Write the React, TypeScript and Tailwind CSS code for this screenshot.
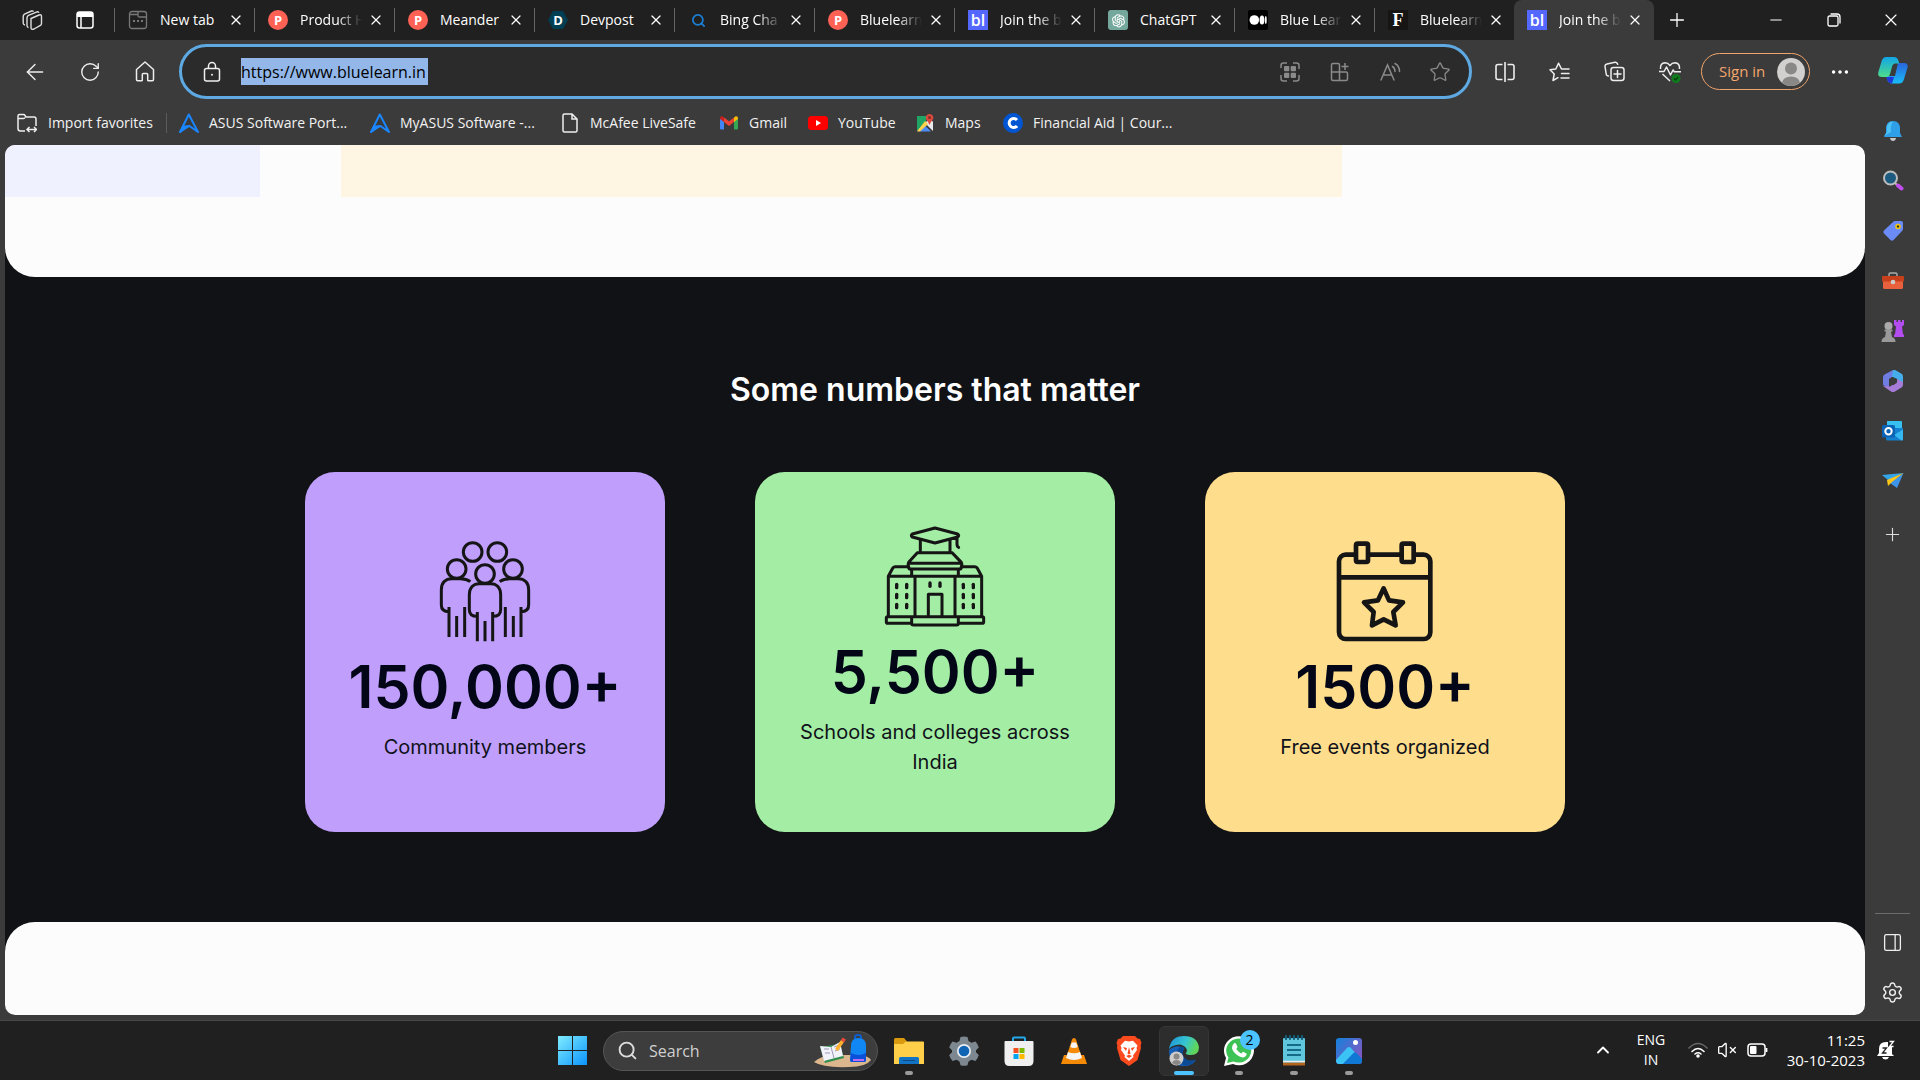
import type { ReactNode } from "react";
import {
  ArrowLeft,
  ChevronUp,
  Ellipsis,
  Minus,
  PanelRight,
  Plus,
  RotateCw,
  Search,
  Settings,
  Star,
  VolumeX,
  X,
} from "lucide-react";
import { AiOutlineOpenAI } from "react-icons/ai";

/* ---------- favicons ---------- */

function ProductHuntIcon() {
  return <span className="flex h-5 w-5 items-center justify-center rounded-full bg-[#ff6154] text-[13px] leading-5 font-bold text-white">P</span>;
}

function BlIcon() {
  return <span className="flex h-5 w-5 items-center justify-center bg-[#5468ff] text-base leading-5 font-semibold text-white">bl</span>;
}

function NewTabIcon() {
  return (
    <svg width="20" height="20" viewBox="0 0 20 20" fill="none" stroke="#777" strokeWidth="1.3">
      <rect x="1.5" y="1.5" width="17" height="17" rx="2.5" />
      <path d="M1.500 4.500H10M10 1.500V5.500Q10 7 11.500 7H18.500" />
      <path d="M5 11h2M9 11h2M13 11h2" strokeWidth="2" />
    </svg>
  );
}

function DevpostIcon() {
  return (
    <span className="relative flex h-5 w-5 items-center justify-center text-[13px] leading-5 font-bold text-white">
      <svg className="absolute inset-0" width="20" height="20" viewBox="0 0 20 20">
        <path d="M5 1h10l5 9-5 9H5l-5-9z" fill="#003e54" />
      </svg>
      <span className="relative">D</span>
    </span>
  );
}

function MediumIcon() {
  return (
    <svg width="20" height="20" viewBox="0 0 20 20">
      <rect width="20" height="20" rx="2" fill="#000" />
      <circle cx="6.300" cy="10" r="4.800" fill="#fff" />
      <ellipse cx="14" cy="10" rx="2.400" ry="4.500" fill="#fff" />
      <ellipse cx="17.800" cy="10" rx="0.900" ry="4" fill="#fff" />
    </svg>
  );
}

type Tab = { label: string; icon: ReactNode; active?: boolean };

const tabs: Tab[] = [
  { label: "New tab", icon: <NewTabIcon /> },
  { label: "Product H", icon: <ProductHuntIcon /> },
  { label: "Meander", icon: <ProductHuntIcon /> },
  { label: "Devpost", icon: <DevpostIcon /> },
  { label: "Bing Cha", icon: <Search size={15} color="#1b7fd6" strokeWidth={2.8} className="mx-auto" /> },
  { label: "Bluelearn", icon: <ProductHuntIcon /> },
  { label: "Join the b", icon: <BlIcon /> },
  {
    label: "ChatGPT",
    icon: (
      <span className="flex h-5 w-5 items-center justify-center rounded-[3px] bg-[#74a89c]">
        <AiOutlineOpenAI size={17} color="#fff" />
      </span>
    ),
  },
  { label: "Blue Lear", icon: <MediumIcon /> },
  {
    label: "Bluelearn",
    icon: <span className="flex h-5 w-5 items-center justify-center bg-[#161514] font-['Liberation_Serif',serif] text-lg leading-5 font-bold text-white">F</span>,
  },
  { label: "Join the b", icon: <BlIcon />, active: true },
];

function TabStrip() {
  return (
    <header className="flex h-10 shrink-0 bg-[#202020] text-sm text-white">
      <div className="flex w-[114px] shrink-0 items-center pl-1">
        <button className="flex w-14 justify-center" aria-label="Workspaces">
          <svg width="21" height="21" viewBox="0 0 21 21" fill="none" stroke="#ddd" strokeWidth="1.400" strokeLinejoin="round">
            <path d="M9 8.500l8-3.500q2.500-.8 2.500 1.500v7q0 1.500-1.500 2.200l-6 3.300q-3 1.200-3-1.500z" />
            <path d="M6.500 17.500q-1.500-.3-1.500-2V8q0-2 1.500-2.700L15 1.800q1.500-.3 2 1" />
            <path d="M3 15q-1.800-.3-1.800-2V6.500Q1.200 5 2.500 4.200L9.500 1q1.500-.4 2 .6" />
          </svg>
        </button>
        <button className="flex w-[50px] justify-center" aria-label="Tab actions menu">
          <svg width="18" height="18" viewBox="0 0 18 18" fill="none" stroke="#fff" strokeWidth="1.500">
            <rect x="1" y="1" width="16" height="16" rx="2.500" />
            <path d="M1 3.500h16" strokeWidth="5" />
            <path d="M5 4v13" />
          </svg>
        </button>
      </div>
      {tabs.map((t, i) => (
        <div
          key={i}
          className={
            t.active
              ? "flex w-[140px] items-center rounded-t-lg bg-[#3b3b3b]"
              : "flex w-[140px] items-center before:h-6 before:w-px before:bg-[#666]"
          }
        >
          <div className="ml-[13px] w-5 shrink-0">{t.icon}</div>
          <button
            className={
              t.label.length > 7
                ? "ml-3 w-[62px] shrink-0 overflow-hidden text-left whitespace-nowrap [mask-image:linear-gradient(to_right,#000_60%,transparent)]"
                : "ml-3 w-[62px] shrink-0 text-left whitespace-nowrap"
            }
          >
            {t.label}
          </button>
          <button className="ml-1 flex w-5 justify-center" aria-label="Close tab">
            <X size={16} strokeWidth={1.8} />
          </button>
        </div>
      ))}
      <button className="ml-[11px] flex w-6 items-center justify-center" aria-label="New tab">
        <Plus size={22} strokeWidth={1.4} />
      </button>
      <div className="ml-auto flex">
        <button className="flex w-[58px] items-center justify-center" aria-label="Minimize">
          <Minus size={18} strokeWidth={1.4} />
        </button>
        <button className="flex w-[57px] items-center justify-center" aria-label="Restore">
          <svg width="14" height="14" viewBox="0 0 14 14" fill="none" stroke="#fff" strokeWidth="1.300">
            <rect x="1" y="3" width="10" height="10" rx="1.500" />
            <path d="M3.500 1h6.500q3 0 3 3v6.500" />
          </svg>
        </button>
        <button className="flex w-[58px] items-center justify-center" aria-label="Close">
          <X size={20} strokeWidth={1.4} />
        </button>
      </div>
    </header>
  );
}

function ToolButton({ label, children }: { label: string; children: ReactNode }) {
  return (
    <button className="flex h-9 w-[55px] shrink-0 items-center justify-center text-[#eee]" aria-label={label}>
      {children}
    </button>
  );
}

function AddressButton({ label, children }: { label: string; children: ReactNode }) {
  return (
    <button className="flex h-9 w-[50px] shrink-0 items-center justify-center text-[#8a8a8a]" aria-label={label}>
      {children}
    </button>
  );
}

function Toolbar() {
  return (
    <div className="flex h-[63px] shrink-0 items-center pl-[7px]">
      <ToolButton label="Back">
        <ArrowLeft size={26} strokeWidth={1.3} />
      </ToolButton>
      <ToolButton label="Refresh">
        <RotateCw size={22} strokeWidth={1.5} />
      </ToolButton>
      <ToolButton label="Home">
        <svg width="20" height="21" viewBox="0 0 20 21" fill="none" stroke="currentColor" strokeWidth="1.500" strokeLinejoin="round">
          <path d="M1.500 8.500L10 1l8.500 7.500V18.500q0 1.200-1.200 1.200H13.500q-.8 0-.8-.8V13.500q0-1-1-1H8.300q-1 0-1 1v5.400q0 .8-.8.800H2.700q-1.200 0-1.200-1.200z" />
        </svg>
      </ToolButton>
      <div className="ml-[7px] flex h-[55px] min-w-0 flex-1 items-center rounded-full border-3 border-[#5ea9e2] bg-[#2b2b2b] pr-1">
        <button className="ml-5 mr-[19px] text-[#eee]" aria-label="View site information">
          <svg width="20" height="22" viewBox="0 0 20 22" fill="none" stroke="currentColor" strokeWidth="1.500">
            <rect x="2.500" y="7.500" width="15" height="12.500" rx="2" />
            <path d="M6.500 7.500V5a3.500 3.500 0 0 1 7 0v2.500" />
            <circle cx="10" cy="13.700" r="1" fill="currentColor" stroke="none" />
          </svg>
        </button>
        <div className="flex min-w-0 flex-1">
          <input
            aria-label="Address and search bar"
            defaultValue="https://www.bluelearn.in"
            className="h-[27px] w-[187px] bg-[#92b7e8] text-base text-black outline-none"
          />
        </div>
        <AddressButton label="Apps">
          <svg width="20" height="20" viewBox="0 0 20 20" fill="none" stroke="currentColor" strokeWidth="1.500">
            <path d="M1 6V3.500Q1 1 3.500 1H7M13 1h3.500Q19 1 19 3.500V7M19 13v3.500q0 2.500-2.500 2.500H13M7 19H3.500Q1 19 1 16.500V13" />
            <g fill="currentColor" stroke="none">
              <rect x="4" y="4" width="5.300" height="5.300" rx="1" />
              <rect x="10.700" y="4" width="5.300" height="5.300" rx="1" />
              <rect x="4" y="10.700" width="5.300" height="5.300" rx="1" />
              <rect x="10.700" y="10.700" width="5.300" height="5.300" rx="1" />
            </g>
          </svg>
        </AddressButton>
        <AddressButton label="App available">
          <svg width="20" height="20" viewBox="0 0 20 20" fill="none" stroke="currentColor" strokeWidth="1.500">
            <path d="M9.500 10V3q0-1.500-1.500-1.500H3Q1.500 1.500 1.500 3v14q0 1.500 1.500 1.500h13q1.500 0 1.500-1.500v-5.500q0-1.500-1.500-1.500H1.500M9.500 10v8.500" />
            <path d="M15 1v7M11.500 4.500h7" />
          </svg>
        </AddressButton>
        <AddressButton label="Read aloud">
          <svg width="21" height="20" viewBox="0 0 21 20" fill="none" stroke="currentColor" strokeWidth="1.500" strokeLinecap="round">
            <path d="M1 18L7.500 3 14 18M3.300 13h8.400" />
            <path d="M12.500 4.500q2.500 1.500 2.500 5M15 1.500q4.500 2.500 4.500 8" />
          </svg>
        </AddressButton>
        <AddressButton label="Add to favorites">
          <Star size={22} strokeWidth={1.4} />
        </AddressButton>
      </div>
      <div className="ml-[5px] flex">
        <ToolButton label="Split screen">
          <svg width="20" height="20" viewBox="0 0 20 20" fill="none" stroke="currentColor" strokeWidth="1.600">
            <path d="M7.500 2.500H3Q1 2.500 1 4.500v11q0 2 2 2h4.500M12.500 2.500H17q2 0 2 2v11q0 2-2 2h-4.500M10 0v20" />
          </svg>
        </ToolButton>
        <ToolButton label="Favorites">
          <svg width="21" height="20" viewBox="0 0 21 20" fill="none" stroke="currentColor" strokeWidth="1.500" strokeLinejoin="round" strokeLinecap="round">
            <path d="M12.500 7L9.500 1.200 6.800 7 1 7.800l4.200 4.200-1.200 6.500 5-2.800M12.500 7H20M12.500 11.500H20M12 16h8" />
          </svg>
        </ToolButton>
        <ToolButton label="Collections">
          <svg width="21" height="21" viewBox="0 0 21 21" fill="none" stroke="currentColor" strokeWidth="1.500" strokeLinecap="round">
            <path d="M4.500 15Q2.500 15 2.200 13L1 5.500Q.8 3.500 3 3l8-1.800q2-.4 2.700 2" />
            <rect x="7" y="6.500" width="13" height="13" rx="2.500" />
            <path d="M13.500 9.500v7M10 13h7" />
          </svg>
        </ToolButton>
        <ToolButton label="Browser essentials">
          <svg width="22" height="22" viewBox="0 0 22 22" fill="none" stroke="currentColor" strokeWidth="1.500" strokeLinejoin="round">
            <path d="M1.500 8Q1 2 6 1.800q3 0 5 2.700 2-2.700 5-2.700 5 .2 4.500 6.200M3.500 13l7.500 7" />
            <path d="M0 10.500h5L7.500 6l4 8 2.500-5 1.300 1.800H22" />
            <circle cx="17" cy="17.500" r="4.500" fill="#0f7b1c" stroke="none" />
            <path d="M15 17.500l1.500 1.500 2.700-3" stroke="#0a3d10" strokeWidth="1.200" />
          </svg>
        </ToolButton>
      </div>
      <button className="ml-1 flex h-[37px] w-[109px] shrink-0 items-center rounded-full border border-[#f0a56c] pl-[17px] text-[15px] text-[#f5a66d]">
        <span className="w-[46px] whitespace-nowrap">Sign in</span>
        <svg className="ml-3" width="28" height="28" viewBox="0 0 28 28">
          <circle cx="14" cy="14" r="14" fill="#d2d0ce" />
          <circle cx="14" cy="10.500" r="6" fill="#8a8886" />
          <path d="M5 24.500q1.500-6 9-6t9 6q-4 3.500-9 3.500t-9-3.500z" fill="#8a8886" />
        </svg>
      </button>
      <button className="ml-[5px] flex h-9 w-[50px] shrink-0 items-center justify-center text-white" aria-label="Settings and more">
        <Ellipsis size={22} strokeWidth={1.8} />
      </button>
    </div>
  );
}

/* ---------- favorites bar ---------- */

function AsusIcon() {
  return (
    <svg width="20" height="20" viewBox="0 0 20 20" fill="none" stroke="#1a86ff" strokeWidth="2" strokeLinejoin="round">
      <path d="M6 13.500L1 19L9.800 1.500 19 19l-8.500-6z" />
      <path d="M1 19l9-6" />
    </svg>
  );
}

const favorites = [
  {
    label: "ASUS Software Port...",
    width: "w-[191px]",
    icon: <AsusIcon />,
  },
  { label: "MyASUS Software -...", width: "w-[190px]", icon: <AsusIcon /> },
  {
    label: "McAfee LiveSafe",
    width: "w-[159px]",
    icon: (
      <svg width="20" height="20" viewBox="0 0 20 20" fill="none" stroke="#eee" strokeWidth="1.500">
        <path d="M3 2.500Q3 1 4.500 1h7.500l5 5v11.500q0 1.500-1.500 1.500h-11Q3 19 3 17.500zM12 1v5h5" />
      </svg>
    ),
  },
  {
    label: "Gmail",
    width: "w-[89px]",
    icon: (
      <svg width="20" height="20" viewBox="0 0 20 20">
        <path d="M1 5v10.500q0 1 1 1h3V8z" fill="#4285f4" />
        <path d="M15 8v8.500h3q1 0 1-1V5z" fill="#34a853" />
        <path d="M1 5.500Q1 3 3.300 3.300L5 4.500V9L1 6z" fill="#c5221f" />
        <path d="M5 4.500l5 3.800 5-3.800V9l-5 4-5-4z" fill="#ea4335" />
        <path d="M15 4.500l1.700-1.200Q19 3 19 5.500V6l-4 3z" fill="#fbbc04" />
      </svg>
    ),
  },
  {
    label: "YouTube",
    width: "w-[107px]",
    icon: (
      <svg width="20" height="20" viewBox="0 0 20 20">
        <rect y="3" width="20" height="14" rx="3.500" fill="#f00" />
        <path d="M8 7v6l5-3z" fill="#fff" />
      </svg>
    ),
  },
  {
    label: "Maps",
    width: "w-[88px]",
    icon: (
      <svg width="20" height="20" viewBox="0 0 20 20">
        <path d="M2 3h9v7L2 18z" fill="#1fa463" />
        <path d="M2 18L15 5l3 4v9l-6-6z" fill="#e8eaed" />
        <path d="M4 18.500l6-6 6 6z" fill="#4d8bf5" />
        <path d="M10 8l3 3-8 7.500H2z" fill="#ffd04b" />
        <path d="M14.500 12Q13.500 9 11.500 7q-1.500-3 .5-5 2.500-2 5 0t.5 5q-2 2-3 5z" fill="#dd4b3e" />
        <circle cx="14.500" cy="4.500" r="1.500" fill="#822d25" />
      </svg>
    ),
  },
  {
    label: "Financial Aid | Cour...",
    width: "w-[170px]",
    icon: (
      <svg width="20" height="20" viewBox="0 0 20 20" fill="none">
        <circle cx="10" cy="10" r="10" fill="#0056d2" />
        <path d="M14 7a4.500 4.500 0 1 0 0 6" stroke="#fff" strokeWidth="3" />
      </svg>
    ),
  },
];

function FavoritesBar() {
  return (
    <nav className="flex h-[42px] shrink-0 items-center pb-[2px] pl-[17px] text-sm whitespace-nowrap text-[#f2f2f2]">
      <button className="flex w-[149px] shrink-0 items-center gap-[11px]">
        <svg width="20" height="20" viewBox="0 0 20 20" fill="none" stroke="#eee" strokeWidth="1.500">
          <path d="M8 18H3.500Q1 18 1 15.500V3Q1 1.500 2.500 1.500h4q1 0 1.500 1l1 1.500h8q2 0 2 2v7M1 5.500h5.500q1 0 1.500-1" />
          <path d="M10.500 16.500h9M12.500 14l-2.500 2.500 2.500 2.500M17 14l2.500 2.500L17 19" />
        </svg>
        Import favorites
      </button>
      <span className="mr-3 h-5 w-px bg-[#5c5c5c]" />
      {favorites.map((f) => (
        <a key={f.label} href="#" className={`flex shrink-0 items-center gap-[10px] ${f.width}`}>
          <span className="w-5 shrink-0">{f.icon}</span>
          {f.label}
        </a>
      ))}
    </nav>
  );
}

/* ---------- page ---------- */

function PeopleIcon() {
  return (
    <svg className="overflow-visible" width="100" height="100" viewBox="405 216 300 300" fill="none" stroke="#151515" strokeWidth="9">
      <circle cx="518" cy="246" r="28" />
      <circle cx="592" cy="246" r="28" />
      <circle cx="470" cy="297" r="28" />
      <circle cx="639" cy="297" r="28" />
      <circle cx="555" cy="312" r="28" />
      <path d="M532 439c-15 0-24-6-24-20V375c0-22 12-34 30-34h34c18 0 30 12 30 34v44c0 14-9 20-24 20" />
      <path d="M532 426v88M555 453v61M578 426v88" />
      <path d="M447 425c-15 0-23-7-23-20V360c0-22 12-34 32-34h25q18 0 30 9M447 411v90M470 438v63M494 411v90" />
      <path d="M663 425c15 0 23-7 23-20V360c0-22-12-34-32-34h-25q-18 0-30 9M663 411v90M640 438v63M616 411v90" />
    </svg>
  );
}

function SchoolIcon() {
  const windows = [440, 470, 640, 670].flatMap((x) => [348, 378, 408].map((y) => [x, y]));
  return (
    <svg className="overflow-visible" width="100" height="100" viewBox="405 171 300 300" fill="none" stroke="#151515" strokeWidth="9" strokeLinejoin="round" strokeLinecap="round">
      <path d="M555 174l-68 18q-6 4 0 9l68 18 68-18q6-5 0-9zM621 200v22q0 8 5 10" />
      <path d="M511 210v36M600 210v36M502 248h104l28 29q4 8-2 20H478q-6-12-2-20zM477 280h156" />
      <path d="M475 290h-40q-5 0-7 5l-13 24v119M635 290h40q5 0 7 5l13 24v119M485 300v18M625 300v18M415 319h280M495 319v119M615 319v119" />
      <path d="M413 440h284q4 0 4 4v12q0 4-4 4h-72v-20M485 440v20h-72q-4 0-4-4v-12q0-4 4-4M485 460q0 5 5 5h130q5 0 5-5M535 438v-65h41v65" />
      <g strokeWidth="10">
        {[...windows, [540, 344], [570, 344]].map(([x, y]) => (
          <path key={`${x}-${y}`} d={`M${x} ${y - 5}v10`} />
        ))}
      </g>
    </svg>
  );
}

function CalendarIcon() {
  return (
    <svg className="overflow-visible" width="100" height="100" viewBox="405 216 300 300" fill="none" stroke="#151515" strokeWidth="14" strokeLinejoin="round">
      <rect x="417" y="254" width="274" height="253" rx="20" />
      <path d="M417 322h274" />
      <rect x="468" y="221" width="36" height="55" rx="5" fill="#fedd8c" />
      <rect x="605" y="221" width="36" height="55" rx="5" fill="#fedd8c" />
      <path d="M551 355l16 36 42 6-29 29 7 40-36-18-35 18 5-40-29-29 42-6z" />
    </svg>
  );
}

const stats = [
  { value: "150,000+", label: "Community members", bg: "bg-[#bf9ffb]", icon: <PeopleIcon /> },
  { value: "5,500+", label: "Schools and colleges across India", bg: "bg-[#a4eda4]", icon: <SchoolIcon /> },
  { value: "1500+", label: "Free events organized", bg: "bg-[#fedd8c]", icon: <CalendarIcon /> },
];

function Page() {
  return (
    <main className="mb-[5px] ml-[5px] flex min-h-0 flex-1 flex-col overflow-hidden rounded-[10px] bg-[#101216] font-['Inter',sans-serif]">
      <div className="flex h-[132px] shrink-0 gap-[81px] rounded-b-[30px] bg-[#fcfcfc]">
        <div className="h-[52px] w-[255px] bg-[#f0f1ff]" />
        <div className="h-[52px] w-[1001px] bg-[#fff5e3]" />
      </div>
      <section className="flex shrink-0 flex-col items-center py-[90px]">
        <h2 className="text-[32px] leading-[45px] font-semibold text-white">Some numbers that matter</h2>
        <div className="mt-[60px] flex gap-[90px]">
          {stats.map((s) => (
            <div key={s.value} className={`flex h-[360px] w-[360px] flex-col items-center justify-center rounded-[30px] px-10 text-center ${s.bg}`}>
              {s.icon}
              <div className="text-[59px] leading-[90px] font-semibold text-[#020617]">{s.value}</div>
              <p className="text-xl leading-[30px] text-[#10121a]">{s.label}</p>
            </div>
          ))}
        </div>
      </section>
      <div className="flex-1 rounded-t-[30px] bg-[#fcfcfc]" />
    </main>
  );
}

/* ---------- sidebar ---------- */

const sidebarApps = [
  {
    label: "Notifications",
    icon: (
      <svg width="22" height="22" viewBox="0 0 22 22">
        <path d="M8 18h6q-.5 3-3 3t-3-3z" fill="#c8c8c8" />
        <path d="M4 9q0-8 7-8t7 8v4l2 4H2l2-4z" fill="#2f9fe8" />
        <path d="M5 8q0-6 6-6.500Q8 6 9 12l-7 4 3-4z" fill="#4cc2f5" />
      </svg>
    ),
  },
  {
    label: "Search",
    icon: (
      <svg width="22" height="22" viewBox="0 0 22 22">
        <path d="M13 13l3 3" stroke="#bdbdbd" strokeWidth="2" />
        <path d="M16 15.500l3.500 3" stroke="#c24df0" strokeWidth="4" strokeLinecap="round" />
        <circle cx="8.500" cy="8" r="6.500" fill="#1c5a80" stroke="#bdbdbd" strokeWidth="2" />
      </svg>
    ),
  },
  {
    label: "Shopping",
    icon: (
      <svg width="22" height="22" viewBox="0 0 22 22">
        <path d="M13 1h6q2 0 2 2v6q0 1-1 2l-8.500 9q-1.500 1.500-3 0l-6.500-6.500q-1.500-1.500 0-3L11 2q1-1 2-1z" fill="#6b8cf7" />
        <circle cx="16" cy="6.500" r="2.800" fill="#f5c800" />
        <circle cx="16" cy="6.500" r="1.200" fill="#333" />
      </svg>
    ),
  },
  {
    label: "Tools",
    icon: (
      <svg width="22" height="22" viewBox="0 0 22 22">
        <path d="M7 7V4.500Q7 3 8.500 3h5Q15 3 15 4.500V7" fill="none" stroke="#aaa" strokeWidth="1.500" />
        <rect x="1" y="10" width="20" height="9" rx="1.500" fill="#e8603c" />
        <rect y="6" width="22" height="5.500" rx="1" fill="#c8401b" />
        <circle cx="11" cy="12" r="2.300" fill="#ccc" />
      </svg>
    ),
  },
  {
    label: "Games",
    icon: (
      <svg width="24" height="24" viewBox="0 0 24 24">
        <path d="M13 1h2.500v2H17V1h2.500v2H21V1h2v5l-2 1.500 1 8h1V18H13v-2.500h1l1-8L13 6z" fill="#b44df0" />
        <circle cx="7.500" cy="7" r="4" fill="#aaa" />
        <path d="M3.500 10.500h8v2H10l1 5.500q3.500 1 3.500 5H.5q0-4 3.500-5l1-5.500H3.500z" fill="#999" />
      </svg>
    ),
  },
  {
    label: "Microsoft 365",
    icon: (
      <svg width="22" height="22" viewBox="0 0 22 22">
        <path d="M11 0L2.500 4.500Q1 5.500 1 7v8l6 3V9l6-4z" fill="#6f7ce0" />
        <path d="M11 0q1.500-.5 3 .5L20 4q1 1 1 2.500V14l-6-5-5-2z" fill="#45aeea" />
        <path d="M21 12v3q0 1.500-1.500 2.500L13 21.500q-2 1-4 0L1 16l7 .5 7-4.500V9z" fill="#a77bd8" />
        <path d="M11 7l3.700 2v4L11 15.200 7.300 13V9z" fill="#3b3b3b" />
      </svg>
    ),
  },
  {
    label: "Outlook",
    icon: (
      <svg width="22" height="22" viewBox="0 0 22 22">
        <path d="M5 1h14q1 0 1 1v9H5z" fill="#38c0f0" />
        <path d="M4 8h17v11q0 1.500-1.500 1.500h-14Q4 20.500 4 19z" fill="#1480cf" />
        <path d="M21 9.500V19q0 1.500-1.500 1.500L12 15z" fill="#35b8f1" />
        <rect x="0" y="5" width="13" height="12.500" rx="1.500" fill="#0a63b5" />
        <circle cx="6.500" cy="11.200" r="3.200" fill="none" stroke="#fff" strokeWidth="2" />
      </svg>
    ),
  },
  {
    label: "Drop",
    icon: (
      <svg width="22" height="22" viewBox="0 0 22 22">
        <path d="M0 5l21.500-2-15 7.500z" fill="#34a6e8" />
        <path d="M21.500 3L15 18l-7-5z" fill="#3d94e8" />
        <path d="M21.500 3L5 10l1 6 4-4z" fill="#ffc61a" />
      </svg>
    ),
  },
];

function CopilotIcon() {
  return (
    <svg width="30" height="27" viewBox="0 0 30 27">
      <defs>
        <linearGradient id="copilotA" x1="0" y1="0" x2="0" y2="1">
          <stop offset="0" stopColor="#12a5e8" />
          <stop offset="1" stopColor="#4ddc8a" />
        </linearGradient>
        <linearGradient id="copilotB" x1="0" y1="0" x2="0" y2="1">
          <stop offset="0" stopColor="#2a64dd" />
          <stop offset="1" stopColor="#18bdf8" />
        </linearGradient>
      </defs>
      <path d="M8 19h9l3-13h6q4.500 0 3.500 4.500L26 22q-1.200 4.500-5 4.500h-7q-4 0-5-5z" fill="url(#copilotB)" />
      <path d="M8 20l8 0-2 6.500q-3.500 0-4.500-3z" fill="#2138d8" />
      <path d="M8 0h8q3.500 0 4.500 4l.8 2.500H17q-2 0-2.800 2.500L12 17q-.8 3-3.500 3H4Q-.8 20 .4 15L3.500 4.500Q4.800 0 8 0z" fill="url(#copilotA)" />
    </svg>
  );
}

function Sidebar() {
  return (
    <aside className="flex w-[55px] shrink-0 flex-col items-center">
      <button className="flex h-[61px] items-center" aria-label="Copilot">
        <CopilotIcon />
      </button>
      <div className="mt-[5px] flex flex-col">
        {sidebarApps.map((a) => (
          <button key={a.label} className="flex h-[50px] w-[50px] items-center justify-center" aria-label={a.label}>
            {a.icon}
          </button>
        ))}
        <button className="mt-[3px] flex h-[50px] w-[50px] items-center justify-center text-[#ddd]" aria-label="Customize">
          <Plus size={21} strokeWidth={1.3} />
        </button>
      </div>
      <div className="mt-auto flex flex-col items-center pb-[3px] text-[#eee]">
        <span className="h-px w-[35px] bg-[#6b6b6b]" />
        <button className="mt-[3px] flex h-[50px] w-[50px] items-center justify-center" aria-label="Hide sidebar">
          <PanelRight size={21} strokeWidth={1.5} />
        </button>
        <button className="flex h-[50px] w-[50px] items-center justify-center" aria-label="Sidebar settings">
          <Settings size={23} strokeWidth={1.5} />
        </button>
      </div>
    </aside>
  );
}

/* ---------- taskbar ---------- */

type TaskApp = { label: string; icon: ReactNode; open?: boolean; active?: boolean };

const taskApps: TaskApp[] = [
  {
    label: "File Explorer",
    open: true,
    icon: (
      <svg width="30" height="30" viewBox="0 0 30 30">
        <path d="M0 3.500Q0 2 1.500 2H10l3 3.500V10H0z" fill="#d99a10" />
        <path d="M0 8h9l3-2.500h17q1 0 1 1V28H0z" fill="#ffcf4a" />
        <path d="M5 28v-5.500Q5 21 6.500 21h17q1.500 0 1.500 1.500V28z" fill="#1273c4" />
        <path d="M9 24.500h12" stroke="#0a4a85" />
      </svg>
    ),
  },
  {
    label: "Settings",
    icon: (
      <svg width="30" height="30" viewBox="0 0 30 30">
        <path
          d="M11.500 1q3.500-1 7 0l1 4 3 1.700 4-1.200q2.300 2.500 3.300 6L27 14.300v2l2.800 2.700q-1 3.500-3.300 6l-4-1.200-3 1.700-1 3.800q-3.500 1-7 0l-1-3.800-3-1.700-4 1.200q-2.300-2.500-3.300-6L3 16.300v-2L.2 11.500q1-3.500 3.300-6l4 1.200L10.500 5z"
          fill="#7d8790"
        />
        <circle cx="15" cy="15" r="7" fill="#e8eef2" />
        <circle cx="15" cy="15" r="5.300" fill="#0f64b4" />
      </svg>
    ),
  },
  {
    label: "Microsoft Store",
    icon: (
      <svg width="30" height="30" viewBox="0 0 30 30">
        <path d="M9 6V2.500q0-1 1-1h10q1 0 1 1V6" fill="none" stroke="#22a7e8" strokeWidth="2" />
        <path d="M.5 6q0-1 1-1h27q1 0 1 1v19q0 5-5 5h-19q-5 0-5-5z" fill="#f0f0f0" />
        <path d="M9.500 12h5v5h-5z" fill="#f25022" />
        <path d="M15.500 12h5v5h-5z" fill="#7fba00" />
        <path d="M9.500 18h5v5h-5z" fill="#00a4ef" />
        <path d="M15.500 18h5v5h-5z" fill="#ffb900" />
      </svg>
    ),
  },
  {
    label: "VLC",
    icon: (
      <svg width="26" height="28" viewBox="0 0 26 28">
        <path d="M3 18h20l3 9H0z" fill="#f58a07" />
        <path d="M13 1q1.500 0 2 1.500L21 21q-8 4-16 0L11 2.500Q11.500 1 13 1z" fill="#f58a07" />
        <path d="M10.800 5.500h4.400l1.500 4.500q-3.700 2-7.400 0zM7 15q6 2.500 12 0l2 6q-8 4-16 0z" fill="#f5f5f5" />
      </svg>
    ),
  },
  {
    label: "Brave",
    icon: (
      <svg width="26" height="30" viewBox="0 0 26 30">
        <path d="M7 0h12l2.500 2.500L24 3l1.500 4-.8 2 .3 3-3.500 12-8.500 6-8.500-6L1 12l.3-3-.8-2L2 3l2.500-.5z" fill="#fb4a1e" />
        <path
          d="M13 5.500l4-.8 4.500 4.800-1 2.500.5 2-4 5.500.5 1.500-4.500 4-4.500-4 .5-1.500L5 14l.5-2-1-2.500L9 4.700z"
          fill="#fff"
        />
        <path d="M7 11l4 1-1 3zM19 11l-4 1 1 3zM13 11l1.500 6.500-1.500 1-1.500-1zM10 20l3-1.300 3 1.300-3 2z" fill="#fb4a1e" />
      </svg>
    ),
  },
  {
    label: "Microsoft Edge",
    active: true,
    icon: (
      <svg width="30" height="30" viewBox="0 0 30 30">
        <defs>
          <linearGradient id="edgeTop" x1="0" y1="0" x2="1" y2="0.300">
            <stop offset="0" stopColor="#1c8fd8" />
            <stop offset="0.600" stopColor="#36c5d0" />
            <stop offset="1" stopColor="#5fd65a" />
          </linearGradient>
        </defs>
        <path d="M0 14q0 16 15 16 8 0 12-6-9 3-13-3-2-4 1-8-6-6-15 1z" fill="#1460b8" />
        <path d="M0 13Q2 0 15 0t15 11q0 8-8 8-4 0-5.500-1.500Q19 15 17 12 13 7 7 9q-5 1-7 4z" fill="url(#edgeTop)" />
        <path d="M16 29.500q-9-2-9-11 0-5 5-8 3 0 3.500 2-3 4-1 8 4 6 12 3-3 5.500-10.500 6z" fill="#0d4a96" />
        <circle cx="7.500" cy="22.500" r="7" fill="#cfcdcb" />
        <circle cx="7.500" cy="20.500" r="3" fill="#8a8886" />
        <path d="M3 27q1-3 4.500-3t4.500 3q-4 4-9 0z" fill="#8a8886" />
      </svg>
    ),
  },
  {
    label: "WhatsApp",
    open: true,
    icon: (
      <span className="relative block h-[30px] w-[30px]">
        <svg width="30" height="30" viewBox="0 0 30 30">
          <path d="M0 30l2-8A15 14.500 0 1 1 9 28z" fill="#fff" />
          <path d="M3 27l1.500-5.500A12.500 12 0 1 1 9.500 25.500z" fill="#3dc255" />
          <path d="M9.500 8q1-1.500 2.500-.5l1.500 3.500-1.200 2q2 3 5 4.500l1.700-1.700 3.500 1.800q.5 2.500-2.500 3.700-3 .8-7-2.300-4.500-3.500-5-7 0-2.500 1.500-4z" fill="#fff" />
        </svg>
        <span className="absolute -top-[6px] -right-[6px] flex h-5 w-5 items-center justify-center rounded-full bg-[#4cc2ff] text-sm leading-5 text-black">2</span>
      </span>
    ),
  },
  {
    label: "Notepad",
    open: true,
    icon: (
      <svg width="24" height="31" viewBox="0 0 24 31">
        <rect x="1" y="26" width="22" height="4.500" fill="#b5651d" />
        <rect x="1" y="3" width="22" height="24.500" rx="1" fill="#5fc6de" />
        <path d="M1 26.500h22" stroke="#eee" strokeWidth="1.500" />
        <path d="M4 1v3M8 1v3M12 1v3M16 1v3M20 1v3" stroke="#125a75" strokeWidth="2.200" strokeLinecap="round" />
        <path d="M5 10h14M5 15h14M5 20h14" stroke="#156a88" strokeWidth="1.800" />
      </svg>
    ),
  },
  {
    label: "Photos",
    open: true,
    icon: (
      <svg width="26" height="26" viewBox="0 0 26 26">
        <defs>
          <linearGradient id="photosBg" x1="0" y1="0" x2="1" y2="0.800">
            <stop offset="0" stopColor="#1282dc" />
            <stop offset="1" stopColor="#8a55c0" />
          </linearGradient>
        </defs>
        <rect width="26" height="26" rx="3" fill="url(#photosBg)" />
        <path d="M0 22L11 10q2-2 4 0l4 4.500L7 26H3q-3 0-3-4z" fill="#3cc3f5" />
        <path d="M7 26l10.500-11q1.500-1.500 3 0l5.500 6v2q0 3-3 3z" fill="#0f78d4" />
        <circle cx="19.500" cy="4.500" r="2.500" fill="#fff" />
      </svg>
    ),
  },
];

function Taskbar() {
  return (
    <footer className="grid h-[60px] shrink-0 grid-cols-[1fr_auto_1fr] border-t border-[#484848] bg-[#202020]">
      <div />
      <div className="flex items-center">
        <button className="flex w-14 justify-center" aria-label="Start">
          <svg width="29" height="29" viewBox="0 0 29 29">
            <defs>
              <linearGradient id="start" gradientUnits="userSpaceOnUse" x1="0" y1="0" x2="29" y2="29">
                <stop offset="0" stopColor="#80ecff" />
                <stop offset="1" stopColor="#0a94fb" />
              </linearGradient>
            </defs>
            <path d="M0 0h14v14H0zM15 0h14v14H15zM0 15h14v14H0zM15 15h14v14H15z" fill="url(#start)" />
          </svg>
        </button>
        <div className="mx-[3px] flex h-10 w-[275px] items-center rounded-full border border-[#555] bg-[#3d3d3d] pl-[13px] pr-1">
          <Search size={21} strokeWidth={2.2} color="#dcdcdc" />
          <input aria-label="Search" placeholder="Search" className="ml-[11px] min-w-0 flex-1 text-base text-white outline-none placeholder:text-[#d0d0d0]" />
          <svg width="60" height="34" viewBox="0 0 60 34">
            <path d="M1 28q8-7 20-7h25q10 1 12 5-5 7-22 7-26 1-35-5z" fill="#dcb68c" />
            <path d="M7 13l20-3 4 14-19 5z" fill="#2f8f4e" />
            <path d="M7 12l11 1 9-5 3 14-8 2-11 3z" fill="#f2f2fa" />
            <path d="M18 13l3 11M11 15l5 0M12 19l5 0M21 13l5-2M22 17l5-2" stroke="#9a9ab8" />
            <path d="M22 15l6-9 3 2-6 9z" fill="#ffb030" />
            <path d="M28 6l1.500-2.500 3.500 2-2 3z" fill="#e84a3a" />
            <path d="M42 7V3q0-2 3-2t3 2v4" fill="none" stroke="#0d5fd0" strokeWidth="2" />
            <path d="M38 12q0-8 7.500-8t7.500 8v14q0 2-2 2H39q-2 0-2-2z" fill="#1187f5" />
            <path d="M38 19q7 4 15 0v7q0 2-2 2H39q-2 0-2-2z" fill="#0b50d8" />
            <path d="M40 26h11" stroke="#c06bf0" strokeWidth="2" />
          </svg>
        </div>
        {taskApps.map((a) => (
          <button key={a.label} className="flex w-[55px] justify-center" aria-label={a.label}>
            <span
              className={
                a.active
                  ? "flex h-[50px] w-[50px] flex-col items-center rounded-md border border-[#363636] bg-[#2d2d2d]"
                  : "flex h-[50px] w-[50px] flex-col items-center border border-transparent"
              }
            >
              <span className="flex h-[44px] items-center pt-1">{a.icon}</span>
              {a.active && <span className="h-1 w-5 rounded-full bg-[#4cc2ff]" />}
              {a.open && <span className="h-1 w-2 rounded-full bg-[#9a9a9a]" />}
            </span>
          </button>
        ))}
      </div>
      <div className="flex items-center justify-end pb-[2px] text-[15px] text-white">
        <ChevronUp size={20} strokeWidth={2.2} />
        <div className="ml-5 w-9 text-center text-sm leading-5">
          ENG
          <br />
          IN
        </div>
        <div className="ml-[19px] flex items-center">
          <svg width="20" height="16" viewBox="0 0 20 16" fill="none" stroke="#fff" strokeWidth="1.600" strokeLinecap="round">
            <path d="M1 6Q10-3 19 6" stroke="#666" />
            <path d="M4 9.500q6-6 12 0" />
            <path d="M7 12q3-2.500 6 0" />
            <circle cx="10" cy="14" r="1" fill="#fff" />
          </svg>
          <VolumeX className="ml-[9px]" size={20} strokeWidth={1.6} />
          <svg className="ml-[10px]" width="21" height="14" viewBox="0 0 21 14" fill="none">
            <rect x="1" y="1" width="17" height="12" rx="3" stroke="#fff" strokeWidth="1.500" />
            <rect x="3" y="3" width="6.500" height="8" rx="1" fill="#fff" />
            <path d="M19.500 5v4" stroke="#fff" strokeWidth="1.800" />
          </svg>
        </div>
        <div className="ml-3 w-[85px] text-right leading-5">
          11:25
          <br />
          30-10-2023
        </div>
        <button className="ml-3 mr-[25px]" aria-label="Do not disturb">
          <svg width="18" height="20" viewBox="0 0 18 20">
            <path d="M2 9q0-7 7-7h2v5h4v7l2 2H0l2-3zM5 17h7q-1 2.500-3.500 2.500T5 17z" fill="#fff" />
            <path d="M5.500 8h4l-4 5h4" fill="none" stroke="#202020" strokeWidth="1.300" />
            <path d="M12.500 1.500h4l-4 5h4" fill="none" stroke="#fff" strokeWidth="1.300" />
          </svg>
        </button>
      </div>
    </footer>
  );
}

export default function App() {
  return (
    <div className="flex h-screen flex-col overflow-hidden bg-[#3b3b3b] font-['Open_Sans','Noto_Sans',sans-serif]">
      <TabStrip />
      <div className="flex min-h-0 flex-1">
        <div className="flex min-w-0 flex-1 flex-col">
          <Toolbar />
          <FavoritesBar />
          <Page />
        </div>
        <Sidebar />
      </div>
      <Taskbar />
    </div>
  );
}
